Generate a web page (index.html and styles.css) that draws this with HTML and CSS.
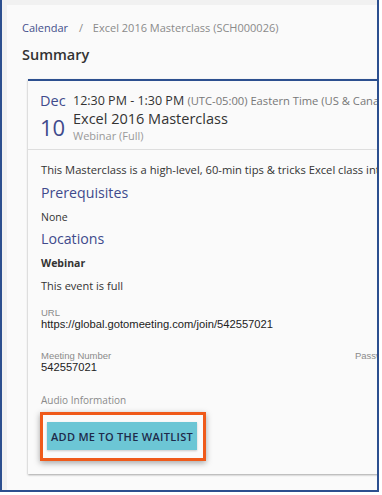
FILE: index.html
```html
<!DOCTYPE html>
<html lang="en">
<head>
    <meta charset="UTF-8">
    <meta name="viewport" content="width=device-width, initial-scale=1.0">
    <title>Excel 2016 Masterclass - Summary</title>
    <link rel="stylesheet" href="styles.css">
</head>
<body>
    <div class="frame">
        <div class="panel">
            <div class="breadcrumb">
                <a href="#" class="crumb-link">Calendar</a>
                <span class="crumb-sep">/</span>
                <span class="crumb-current">Excel 2016 Masterclass (SCH000026)</span>
            </div>
            <h2 class="page-title">Summary</h2>

            <div class="event-card">
                <div class="event-head">
                    <div class="event-date">
                        <div class="month">Dec</div>
                        <div class="day">10</div>
                    </div>
                    <div class="event-info">
                        <div class="event-time">12:30 PM - 1:30 PM <span class="zone">(UTC-05:00) Eastern Time (US &amp; Canada)</span></div>
                        <div class="event-title">Excel 2016 Masterclass</div>
                        <div class="event-type">Webinar (Full)</div>
                    </div>
                </div>

                <div class="event-body">
                    <p class="desc">This Masterclass is a high-level, 60-min tips &amp; tricks Excel class intended for all users</p>
                    <h3 class="section">Prerequisites</h3>
                    <p class="plain">None</p>
                    <h3 class="section">Locations</h3>
                    <p class="loc-name">Webinar</p>
                    <p class="full">This event is full</p>

                    <div class="field url-field">
                        <div class="field-label">URL</div>
                        <div class="field-value">https://global.gotomeeting.com/join/542557021</div>
                    </div>

                    <div class="field-row">
                        <div class="field meeting">
                            <div class="field-label">Meeting Number</div>
                            <div class="field-value">542557021</div>
                        </div>
                        <div class="field">
                            <div class="field-label">Password</div>
                        </div>
                    </div>

                    <div class="audio-label">Audio Information</div>

                    <div class="highlight">
                        <button class="waitlist-btn">ADD ME TO THE WAITLIST</button>
                    </div>
                </div>
            </div>
        </div>
    </div>
</body>
</html>
```

FILE: styles.css
```css
body {
    margin: 0;
    background: #ffffff;
    font-family: "Open Sans", Arial, sans-serif;
    color: #333;
}
.frame {
    width: 375px;
    height: 490px;
    border-left: 2px solid #2c4f8f;
    border-right: 2px solid #2c4f8f;
    border-bottom: 2px solid #2c4f8f;
    background: #f1f1f1;
    overflow: hidden;
}
.panel {
    margin: 5px 0 0 5px;
    height: 485px;
    background: #fafafa;
    padding: 15px 0 0 15px;
    box-sizing: border-box;
}
.breadcrumb {
    font-size: 11px;
    line-height: 16px;
    color: #8a8a8a;
    white-space: nowrap;
}
.crumb-link {
    color: #45508c;
    text-decoration: none;
}
.crumb-sep {
    margin: 0 7px 0 8px;
}
.page-title {
    margin: 9px 0 0 0;
    font-size: 14.5px;
    font-weight: 600;
    line-height: 20px;
    color: #333;
}
.event-card {
    margin: 14px 0 0 6px;
    width: 420px;
    height: 393px;
    background: #fafafa;
    border-top: 2px solid #2c4f8f;
    box-shadow: 0 1px 2px rgba(0, 0, 0, 0.35);
}
.event-head {
    display: flex;
    padding: 11px 0 6px 12px;
    border-bottom: 1px solid #dedede;
}
.event-date {
    width: 33px;
    color: #404a8c;
}
.month {
    font-size: 14.5px;
    line-height: 18px;
}
.day {
    font-size: 22px;
    line-height: 28px;
    margin-top: 3px;
}
.event-info {
    white-space: nowrap;
}
.event-time {
    font-size: 12.5px;
    line-height: 17px;
    color: #333;
}
.zone {
    font-size: 11.2px;
    color: #777;
}
.event-title {
    font-size: 14.5px;
    line-height: 18px;
    margin-top: 1px;
    color: #333;
}
.event-type {
    font-size: 11px;
    line-height: 15px;
    color: #999;
}
.event-body {
    padding: 12px 0 0 13px;
}
.desc {
    margin: 0;
    font-size: 11.2px;
    line-height: 16px;
    white-space: nowrap;
}
.section {
    margin: 5px 0 0 0;
    font-size: 14.2px;
    font-weight: 400;
    line-height: 20px;
    color: #404a8c;
}
.plain {
    margin: 7px 0 0 0;
    font-size: 10.5px;
    line-height: 14px;
}
.loc-name {
    margin: 7px 0 0 0;
    font-size: 10.5px;
    font-weight: 700;
    line-height: 14px;
}
.full {
    margin: 8px 0 0 0;
    font-size: 11px;
    line-height: 15px;
}
.url-field {
    margin-top: 14px;
}
.field-label {
    font-family: "Liberation Sans", Arial, sans-serif;
    font-size: 9.5px;
    line-height: 11px;
    color: #8a8a8a;
}
.field-value {
    font-family: "Liberation Sans", Arial, sans-serif;
    font-size: 11.2px;
    line-height: 13px;
    color: #222;
    white-space: nowrap;
}
.field-row {
    display: flex;
    margin-top: 19px;
    white-space: nowrap;
}
.meeting {
    width: 314px;
}
.audio-label {
    margin-top: 19px;
    font-size: 10px;
    line-height: 14px;
    color: #8a8a8a;
}
.highlight {
    display: inline-block;
    margin: 5px 0 0 -1px;
    padding: 7px 6px 8px 4px;
    border: 3px solid #ef5a1a;
    box-shadow: 0 2px 6px rgba(0, 0, 0, 0.35);
}
.waitlist-btn {
    display: block;
    width: 150px;
    height: 28px;
    padding: 0;
    border: none;
    background: #6cc6d5;
    font-family: "Open Sans", Arial, sans-serif;
    font-size: 11px;
    font-weight: 600;
    letter-spacing: 0.3px;
    color: #1e2a4a;
    box-shadow: 0 1px 2px rgba(0, 0, 0, 0.2);
}
```
